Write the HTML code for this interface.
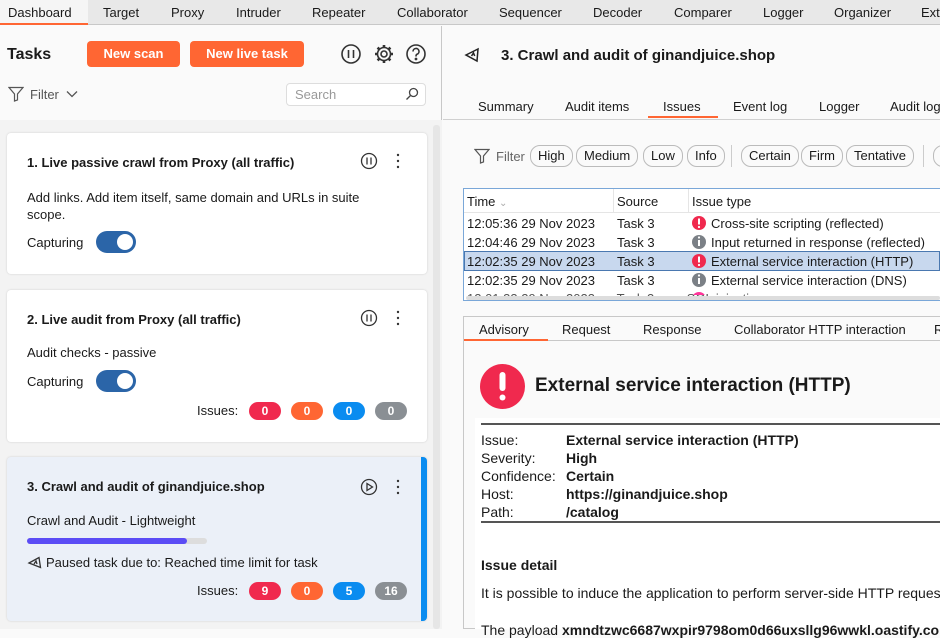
<!DOCTYPE html>
<html><head><style>
*{box-sizing:border-box;margin:0;padding:0}
body{width:940px;height:629px;overflow:hidden;font-family:"Liberation Sans",sans-serif;font-size:13px;color:#1a1a1a;background:#fafafa;position:relative}
.a{position:absolute;white-space:nowrap}
.b{font-weight:bold}
.topbar{left:0;top:0;width:940px;height:25px;background:#e8e8e8;border-bottom:1px solid #c8c8c8}
.btn{background:#ff6633;color:#fff;font-weight:bold;border-radius:4px;height:26px;line-height:26px;text-align:center;font-size:13px}
.card{background:#fff;border-radius:4px;box-shadow:0 0 2px rgba(0,0,0,.15)}
.pill{border-radius:10px;height:18px;line-height:18px;width:32px;text-align:center;color:#fff;font-weight:bold;font-size:12px}
.fp{border:1px solid #bbb;border-radius:10px;height:22px;line-height:20px;padding:0 7px;font-size:13px;top:145px}
.tog{width:40px;height:22px;border-radius:11px;background:#2b65a8}
.tog::after{content:"";position:absolute;right:3px;top:3px;width:16px;height:16px;border-radius:50%;background:#fff}
</style></head><body>
<div class="a topbar"></div>
<div class="a" style="left:0;top:0;width:88px;height:25px;background:#f5f5f5;border-bottom:2px solid #ff6633"></div>
<div class="a" style="left:8px;top:5px">Dashboard</div>
<div class="a" style="left:103px;top:5px">Target</div>
<div class="a" style="left:171px;top:5px">Proxy</div>
<div class="a" style="left:236px;top:5px">Intruder</div>
<div class="a" style="left:312px;top:5px">Repeater</div>
<div class="a" style="left:397px;top:5px">Collaborator</div>
<div class="a" style="left:499px;top:5px">Sequencer</div>
<div class="a" style="left:593px;top:5px">Decoder</div>
<div class="a" style="left:674px;top:5px">Comparer</div>
<div class="a" style="left:763px;top:5px">Logger</div>
<div class="a" style="left:834px;top:5px">Organizer</div>
<div class="a" style="left:921px;top:5px">Ext</div>

<div class="a" style="left:0;top:26px;width:442px;height:603px;background:#fafafa;border-right:1px solid #c8c8c8"></div>
<div class="a" style="left:0;top:120px;width:442px;height:509px;background:#f3f3f3"></div>
<div class="a b" style="left:7px;top:46px;font-size:16px">Tasks</div>
<div class="a btn" style="left:87px;top:41px;width:93px">New scan</div>
<div class="a btn" style="left:190px;top:41px;width:114px">New live task</div>
<svg class="a" style="left:340px;top:43px" width="90" height="22" viewBox="0 0 90 22" fill="none" stroke="#333" stroke-width="1.6">
<circle cx="11" cy="11" r="9"/><path d="M8.5 7v8M13.5 7v8"/>
<circle cx="44" cy="11" r="3"/><circle cx="44" cy="11" r="6.5"/>
<path d="M44 2v2.5M44 17.5V20M35 11h2.5M50.5 11H53M37.6 4.6l1.8 1.8M48.6 15.6l1.8 1.8M37.6 17.4l1.8-1.8M48.6 6.4l1.8-1.8" stroke-width="2.6"/>
<circle cx="76" cy="11" r="9"/><path d="M73 8.5a3 3 0 1 1 4 2.8c-1 .4-1 1-1 2.2"/><circle cx="76" cy="16" r=".6" fill="#333"/>
</svg>
<svg class="a" style="left:8px;top:86px" width="16" height="16" viewBox="0 0 16 16" fill="none" stroke="#555" stroke-width="1.2"><path d="M1 1.5h14L9.5 8v6L6.5 15V8z"/></svg>
<div class="a" style="left:30px;top:87px;color:#555">Filter</div>
<svg class="a" style="left:66px;top:89px" width="12" height="10" viewBox="0 0 12 10" fill="none" stroke="#555" stroke-width="1.3"><path d="M1 2.5l5 5 5-5"/></svg>
<div class="a" style="left:286px;top:83px;width:140px;height:23px;background:#fff;border:1px solid #ddd;border-radius:4px"></div>
<div class="a" style="left:295px;top:87px;color:#999">Search</div>
<svg class="a" style="left:405px;top:87px" width="14" height="14" viewBox="0 0 14 14" fill="none" stroke="#444" stroke-width="1.3"><circle cx="8.5" cy="5.5" r="4"/><path d="M5.5 8.5L1.5 12.5"/></svg>

<div class="a" style="left:433px;top:125px;width:7px;height:504px;background:#e6e6e6;border-radius:3px"></div>

<div class="a card" style="left:7px;top:133px;width:420px;height:141px"></div>
<div class="a b" style="left:27px;top:155px">1. Live passive crawl from Proxy (all traffic)</div>
<div class="a" style="left:27px;top:189px;line-height:17px;white-space:normal;width:360px">Add links. Add item itself, same domain and URLs in suite scope.</div>
<div class="a" style="left:27px;top:235px">Capturing</div>
<div class="a tog" style="left:96px;top:231px"></div>

<div class="a card" style="left:7px;top:290px;width:420px;height:152px"></div>
<div class="a b" style="left:27px;top:312px">2. Live audit from Proxy (all traffic)</div>
<div class="a" style="left:27px;top:345px">Audit checks - passive</div>
<div class="a" style="left:27px;top:374px">Capturing</div>
<div class="a tog" style="left:96px;top:370px"></div>
<div class="a" style="left:197px;top:403px">Issues:</div>
<div class="a pill" style="left:249px;top:402px;background:#f0294e">0</div>
<div class="a pill" style="left:291px;top:402px;background:#ff6633">0</div>
<div class="a pill" style="left:333px;top:402px;background:#0a8cf0">0</div>
<div class="a pill" style="left:375px;top:402px;background:#8a8f94">0</div>

<div class="a card" style="left:7px;top:457px;width:420px;height:164px;background:#ebf0f8"></div>
<div class="a" style="left:421px;top:457px;width:6px;height:164px;background:#0a8cf0;border-radius:0 4px 4px 0"></div>
<div class="a b" style="left:27px;top:479px">3. Crawl and audit of ginandjuice.shop</div>
<div class="a" style="left:27px;top:513px">Crawl and Audit - Lightweight</div>
<div class="a" style="left:27px;top:538px;width:180px;height:6px;background:#ddd;border-radius:3px"></div>
<div class="a" style="left:27px;top:538px;width:160px;height:6px;background:#5b4cf5;border-radius:3px"></div>
<svg class="a" style="left:27px;top:555px" width="16" height="16" viewBox="0 0 16 16" fill="none" stroke="#333" stroke-width="1.3"><path d="M2 8L12 2.5 13.5 12.5z"/><path d="M7 9l2-3 1 3"/></svg>
<div class="a" style="left:46px;top:555px">Paused task due to: Reached time limit for task</div>
<div class="a" style="left:197px;top:583px">Issues:</div>
<div class="a pill" style="left:249px;top:582px;background:#f0294e">9</div>
<div class="a pill" style="left:291px;top:582px;background:#ff6633">0</div>
<div class="a pill" style="left:333px;top:582px;background:#0a8cf0">5</div>
<div class="a pill" style="left:375px;top:582px;background:#8a8f94">16</div>
<svg class="a" style="left:360px;top:151px" width="50" height="20" viewBox="0 0 50 20" fill="none" stroke="#333" stroke-width="1.3"><circle cx="9" cy="10" r="7.5"/><path d="M7 6.5v7M11 6.5v7"/><circle cx="38" cy="4" r="1.2" fill="#333" stroke="none"/><circle cx="38" cy="10" r="1.2" fill="#333" stroke="none"/><circle cx="38" cy="16" r="1.2" fill="#333" stroke="none"/></svg>
<svg class="a" style="left:360px;top:308px" width="50" height="20" viewBox="0 0 50 20" fill="none" stroke="#333" stroke-width="1.3"><circle cx="9" cy="10" r="7.5"/><path d="M7 6.5v7M11 6.5v7"/><circle cx="38" cy="4" r="1.2" fill="#333" stroke="none"/><circle cx="38" cy="10" r="1.2" fill="#333" stroke="none"/><circle cx="38" cy="16" r="1.2" fill="#333" stroke="none"/></svg>
<svg class="a" style="left:360px;top:477px" width="50" height="20" viewBox="0 0 50 20" fill="none" stroke="#333" stroke-width="1.3"><circle cx="9" cy="10" r="7.5"/><path d="M7 6.5v7l5.5-3.5z"/><circle cx="38" cy="4" r="1.2" fill="#333" stroke="none"/><circle cx="38" cy="10" r="1.2" fill="#333" stroke="none"/><circle cx="38" cy="16" r="1.2" fill="#333" stroke="none"/></svg>

<svg class="a" style="left:464px;top:46px" width="18" height="18" viewBox="0 0 18 18" fill="none" stroke="#222" stroke-width="1.5"><path d="M2 9L14 3 13 15z"/><path d="M7.5 10l2-3 1.2 3"/></svg>
<div class="a b" style="left:501px;top:47px;font-size:15px">3. Crawl and audit of ginandjuice.shop</div>
<div class="a" style="left:478px;top:99px">Summary</div>
<div class="a" style="left:565px;top:99px">Audit items</div>
<div class="a" style="left:663px;top:99px">Issues</div>
<div class="a" style="left:733px;top:99px">Event log</div>
<div class="a" style="left:819px;top:99px">Logger</div>
<div class="a" style="left:890px;top:99px">Audit log</div>
<div class="a" style="left:648px;top:116px;width:70px;height:2px;background:#ff6633"></div>
<div class="a" style="left:443px;top:119px;width:497px;height:1px;background:#d0d0d0"></div>

<svg class="a" style="left:474px;top:148px" width="16" height="16" viewBox="0 0 16 16" fill="none" stroke="#555" stroke-width="1.2"><path d="M1 1.5h14L9.5 8v6L6.5 15V8z"/></svg>
<div class="a" style="left:496px;top:149px;color:#666">Filter</div>
<div class="a fp" style="left:530px">High</div>
<div class="a fp" style="left:576px">Medium</div>
<div class="a fp" style="left:643px">Low</div>
<div class="a fp" style="left:687px">Info</div>
<div class="a" style="left:731px;top:145px;width:1px;height:22px;background:#ccc"></div>
<div class="a fp" style="left:741px">Certain</div>
<div class="a fp" style="left:801px">Firm</div>
<div class="a fp" style="left:846px">Tentative</div>
<div class="a" style="left:923px;top:145px;width:1px;height:22px;background:#ccc"></div>
<div class="a fp" style="left:933px;width:20px"></div>

<div class="a" style="left:463px;top:188px;width:480px;height:113px;background:#fff;border:1px solid #7aa7d8"></div>
<div class="a" style="left:464px;top:189px;width:476px;height:24px;background:#fff;border-bottom:1px solid #e5e5e5"></div>
<div class="a" style="left:613px;top:189px;width:1px;height:24px;background:#e5e5e5"></div>
<div class="a" style="left:688px;top:189px;width:1px;height:24px;background:#e5e5e5"></div>
<div class="a" style="left:467px;top:194px">Time <span style="color:#aaa;font-size:10px">&#8964;</span></div>
<div class="a" style="left:617px;top:194px">Source</div>
<div class="a" style="left:692px;top:194px">Issue type</div>
<div class="a" style="left:464px;top:251px;width:476px;height:20px;background:#c8d8ee;border:1px solid #4a78b0"></div>
<div class="a" style="left:467px;top:216px">12:05:36 29 Nov 2023</div><div class="a" style="left:617px;top:216px">Task 3</div><div class="a" style="left:711px;top:216px">Cross-site scripting (reflected)</div>
<div class="a" style="left:467px;top:235px">12:04:46 29 Nov 2023</div><div class="a" style="left:617px;top:235px">Task 3</div><div class="a" style="left:711px;top:235px">Input returned in response (reflected)</div>
<div class="a" style="left:467px;top:254px">12:02:35 29 Nov 2023</div><div class="a" style="left:617px;top:254px">Task 3</div><div class="a" style="left:711px;top:254px">External service interaction (HTTP)</div>
<div class="a" style="left:467px;top:273px">12:02:35 29 Nov 2023</div><div class="a" style="left:617px;top:273px">Task 3</div><div class="a" style="left:711px;top:273px">External service interaction (DNS)</div>
<div class="a" style="left:467px;top:291px;height:5px;overflow:hidden;width:470px;color:#555">12:01:33 29 Nov 2023 &nbsp;&nbsp;&nbsp;&nbsp;&nbsp;Task 3 &nbsp;&nbsp;&nbsp;&nbsp;&nbsp;&nbsp;&nbsp;&nbsp;SQL injection</div>
<div class="a" style="left:466px;top:296px;width:474px;height:4px;background:#ddd;border-radius:2px"></div>
<svg class="a" style="left:692px;top:215px" width="16" height="80" viewBox="0 0 16 80">
<circle cx="7" cy="8" r="7" fill="#f0294e"/><rect x="6" y="3.5" width="2" height="6" fill="#fff"/><circle cx="7" cy="12" r="1.1" fill="#fff"/>
<circle cx="7" cy="27" r="7" fill="#7b8086"/><rect x="6" y="25" width="2" height="6" fill="#fff"/><circle cx="7" cy="22.5" r="1.1" fill="#fff"/>
<circle cx="7" cy="46" r="7" fill="#f0294e"/><rect x="6" y="41.5" width="2" height="6" fill="#fff"/><circle cx="7" cy="50" r="1.1" fill="#fff"/>
<circle cx="7" cy="65" r="7" fill="#7b8086"/><rect x="6" y="63" width="2" height="6" fill="#fff"/><circle cx="7" cy="60.5" r="1.1" fill="#fff"/>
<circle cx="7" cy="84" r="7" fill="#f39"/>
</svg>

<div class="a" style="left:463px;top:316px;width:480px;height:313px;border:1px solid #c8c8c8;background:#fafafa"></div>
<div class="a" style="left:464px;top:317px;width:476px;height:24px;background:#fafafa;border-bottom:1px solid #c8c8c8"></div>
<div class="a" style="left:479px;top:322px">Advisory</div>
<div class="a" style="left:562px;top:322px">Request</div>
<div class="a" style="left:643px;top:322px">Response</div>
<div class="a" style="left:734px;top:322px">Collaborator HTTP interaction</div>
<div class="a" style="left:934px;top:322px">R</div>
<div class="a" style="left:464px;top:339px;width:84px;height:2px;background:#ff6633"></div>
<div class="a" style="left:475px;top:418px;width:465px;height:211px;background:#fff"></div>

<svg class="a" style="left:480px;top:364px" width="45" height="45" viewBox="0 0 45 45"><circle cx="22.5" cy="22.5" r="22.5" fill="#f0294e"/><rect x="19.5" y="8" width="6" height="19" rx="3" fill="#fff"/><circle cx="22.5" cy="33.5" r="3" fill="#fff"/></svg>
<div class="a b" style="left:535px;top:375px;font-size:19px">External service interaction (HTTP)</div>
<div class="a" style="left:481px;top:423px;width:460px;height:2px;background:#555"></div>
<div class="a" style="left:481px;top:521px;width:460px;height:2px;background:#555"></div>
<div class="a" style="left:481px;top:431px;line-height:18px;font-size:14px">Issue:<br>Severity:<br>Confidence:<br>Host:<br>Path:</div>
<div class="a b" style="left:566px;top:431px;line-height:18px;font-size:14px">External service interaction (HTTP)<br>High<br>Certain<br>https://ginandjuice.shop<br>/catalog</div>
<div class="a b" style="left:481px;top:557px;font-size:14px">Issue detail</div>
<div class="a" style="left:481px;top:585px;font-size:14px">It is possible to induce the application to perform server-side HTTP requests</div>
<div class="a" style="left:481px;top:622px;font-size:14px">The payload <b>xmndtzwc6687wxpir9798om0d66uxsllg96wwkl.oastify.com</b></div>
</body></html>
